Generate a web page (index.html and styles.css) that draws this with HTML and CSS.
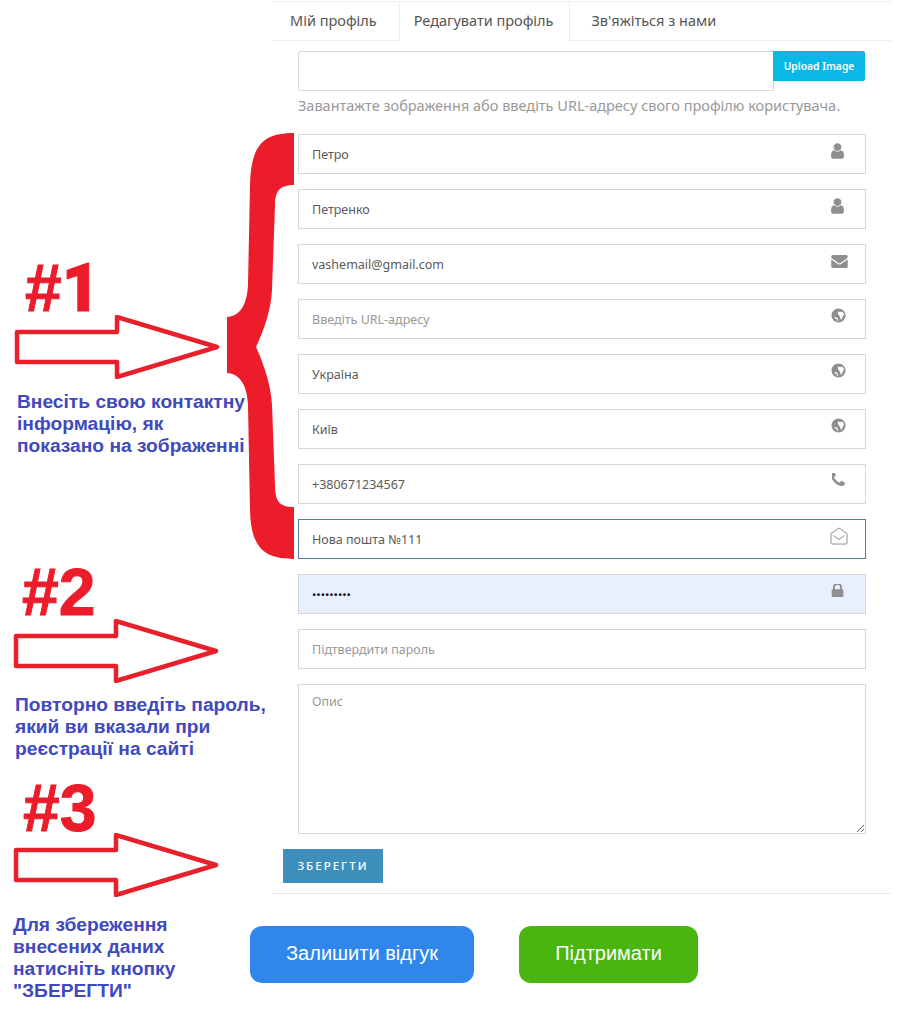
FILE: index.html
```html
<!DOCTYPE html>
<html lang="uk">
<head>
<meta charset="utf-8">
<title>Редагувати профіль</title>
<link rel="stylesheet" href="styles.css">
</head>
<body>
<svg width="0" height="0" class="defs">
  <symbol id="i-user" viewBox="256 128 1280 1536"><path d="M1536 1399q0 109-62.5 187t-150.5 78h-854q-88 0-150.5-78t-62.5-187q0-85 8.5-160.5t31.5-152 58.5-131 94-89 134.5-34.5q131 128 313 128t313-128q76 0 134.5 34.5t94 89 58.5 131 31.5 152 8.5 160.5zm-256-887q0 159-112.5 271.5t-271.5 112.5-271.5-112.5-112.5-271.5 112.5-271.5 271.5-112.5 271.5 112.5 112.5 271.5z"/></symbol>
  <symbol id="i-mail" viewBox="0 256 1792 1408"><path d="M1792 710v794q0 66-47 113t-113 47h-1472q-66 0-113-47t-47-113v-794q44 49 101 87 362 246 497 345 57 42 92.5 65.5t94.5 48 110 24.5h2q51 0 110-24.5t94.5-48 92.5-65.5q170-123 498-345 57-39 100-87zm0-294q0 79-49 151t-122 123q-376 261-468 325-10 7-42.5 30.5t-54 38-52 32.5-57.5 27-50 9h-2q-23 0-50-9t-57.5-27-52-32.5-54-38-42.5-30.5q-91-64-262-182.5t-205-142.5q-62-42-117-115.5t-55-136.5q0-78 41.5-130t118.5-52h1472q65 0 112.5 47t47.5 113z"/></symbol>
  <symbol id="i-globe" viewBox="0 0 16 16"><path fill-rule="evenodd" d="M8 .5a7.500 7.500 0 1 1 0 15 7.500 7.500 0 0 1 0-15zM8 3.500 7.200 5.200 8 7.200 9.800 9.800 10.500 12.800 12 10.800 12.800 8.200 14 7.200 13 4.800 11.300 3.800 9.500 4.600zM3.500 9.500 4.800 11.500 6.500 12 6.300 13.500 7.300 13.800 7.500 11.500 5.500 9.800z"/></symbol>
  <symbol id="i-phone" viewBox="320 256 1280 1280"><path d="M1600 1240q0 27-10 70.5t-21 68.5q-21 50-122 106-94 51-186 51-27 0-53-3.5t-57.5-12.5-47-14.5-55.5-20.5-49-18q-98-35-175-83-127-79-264-216t-216-264q-48-77-83-175-3-9-18-49t-20.5-55.5-14.5-47-12.5-57.5-3.5-53q0-92 51-186 56-101 106-122 25-11 68.5-21t70.5-10q14 0 21 3 18 6 53 76 11 19 30 54t35 63.5 31 53.5q3 4 17.5 25t21.5 35.5 7 28.5q0 20-28.5 50t-62 55-62 53-28.5 46q0 9 5 22.5t8.5 20.5 14 24 11.5 19q76 137 174 235t235 174q2 1 19 11.5t24 14 20.5 8.5 22.5 5q18 0 46-28.5t53-62 55-62 50-28.5q14 0 28.5 7t35.5 21.5 25 17.5q25 15 53.5 31t63.5 35 54 30q70 35 76 53 3 7 3 21z"/></symbol>
  <symbol id="i-lock" viewBox="256 256 1280 1280"><path d="M640 768h512v-192q0-106-75-181t-181-75-181 75-75 181v192zm832 96v576q0 40-28 68t-68 28h-960q-40 0-68-28t-28-68v-576q0-40 28-68t68-28h32v-192q0-184 132-316t316-132 316 132 132 316v192h32q40 0 68 28t28 68z"/></symbol>
  <symbol id="i-open" viewBox="0 0 18 18"><path fill="none" stroke="currentColor" d="M1 6.500 9 1l8 5.500V16a1 1 0 0 1-1 1H2a1 1 0 0 1-1-1zM3.500 8.500 9 12.500l5.500-4"/></symbol>
  <symbol id="arrow" viewBox="0 0 206 64"><path fill="none" stroke="#e8202c" stroke-width="4.500" stroke-linejoin="round" d="M3 17H103V2L203 32 103 62V47H3z"/></symbol>
</svg>

<svg class="brace" width="70" height="430" viewBox="225 131 70 430" aria-hidden="true">
  <path fill="#ed1c2a" d="M294 133C264 133 251 144 250 185L248 285C247 305 240 316 227 317V373C240 374 247 385 248 405L250 510C251 548 264 559 294 559V507C280 507 275 502 275 485L272 405C271 385 264 365 256 347C264 330 271 310 272 290L275 205C275 191 280 185 294 185z"/>
</svg>

<div class="page">
  <aside class="notes">
    <section class="note note-one">
      <div class="mark">#<span class="mark-digit">1</span></div>
      <svg class="arrow"><use href="#arrow"/></svg>
      <p>Внесіть свою контактну<br>інформацію, як<br>показано на зображенні</p>
    </section>
    <section class="note note-two">
      <div class="mark">#2</div>
      <svg class="arrow"><use href="#arrow"/></svg>
      <p>Повторно введіть пароль,<br>який ви вказали при<br>реєстрації на сайті</p>
    </section>
    <section class="note note-three">
      <div class="mark">#3</div>
      <svg class="arrow"><use href="#arrow"/></svg>
      <p>Для збереження<br>внесених даних<br>натисніть кнопку<br>"ЗБЕРЕГТИ"</p>
    </section>
  </aside>

  <main class="main">
    <div class="panel">
      <nav class="tabs">
        <a class="tab">Мій профіль</a>
        <a class="tab tab-active">Редагувати профіль</a>
        <a class="tab tab-last">Зв'яжіться з нами</a>
      </nav>
      <form class="form">
        <div class="upload">
          <input class="upload-input" type="text">
          <button class="upload-btn" type="button">Upload Image</button>
        </div>
        <p class="help">Завантажте зображення або введіть URL-адресу свого профілю користувача.</p>
        <div class="fields">
          <div class="field"><input class="input" type="text" value="Петро"><svg class="icon icon-user"><use href="#i-user"/></svg></div>
          <div class="field"><input class="input" type="text" value="Петренко"><svg class="icon icon-user"><use href="#i-user"/></svg></div>
          <div class="field"><input class="input" type="text" value="vashemail@gmail.com"><svg class="icon icon-mail"><use href="#i-mail"/></svg></div>
          <div class="field"><input class="input" type="text" placeholder="Введіть URL-адресу"><svg class="icon icon-globe"><use href="#i-globe"/></svg></div>
          <div class="field"><input class="input" type="text" value="Україна"><svg class="icon icon-globe"><use href="#i-globe"/></svg></div>
          <div class="field"><input class="input" type="text" value="Київ"><svg class="icon icon-globe"><use href="#i-globe"/></svg></div>
          <div class="field"><input class="input" type="text" value="+380671234567"><svg class="icon icon-phone"><use href="#i-phone"/></svg></div>
          <div class="field"><input class="input input-focus" type="text" value="Нова пошта №111"><svg class="icon icon-open"><use href="#i-open"/></svg></div>
          <div class="field"><input class="input input-filled" type="password" value="123456789"><svg class="icon icon-lock"><use href="#i-lock"/></svg></div>
          <div class="field"><input class="input" type="text" placeholder="Підтвердити пароль"></div>
          <textarea class="input textarea" placeholder="Опис"></textarea>
        </div>
        <button class="save" type="button">ЗБЕРЕГТИ</button>
      </form>
    </div>
    <div class="actions">
      <a class="action action-blue">Залишити відгук</a>
      <a class="action action-green">Підтримати</a>
    </div>
  </main>
</div>
</body>
</html>
```
FILE: styles.css
```css
* { box-sizing: border-box; }
html, body { margin: 0; padding: 0; }
body {
  position: relative;
  height: 1024px;
  overflow: hidden;
  background: #fff;
  font-family: "Noto Sans", sans-serif;
  color: #555;
}
.defs { position: absolute; }
.brace { position: absolute; left: 225px; top: 131px; z-index: 2; }
.page { display: flex; align-items: flex-start; }

/* Annotations */
.notes { flex: 0 0 250px; width: 250px; white-space: nowrap; position: relative; z-index: 3; }
.note p {
  margin: 0;
  font: bold 19.2px/22px "Liberation Sans", Arial, sans-serif;
  color: #4049bd;
}
.mark {
  font: bold 66px/50px "Liberation Sans", Arial, sans-serif;
  color: #ed1c2a;
  -webkit-text-stroke: 1px #ed1c2a;
}
.mark-digit { font-family: Roboto, sans-serif; font-weight: 900; }
.arrow { display: block; width: 206px; height: 64px; }
.note-one { padding: 263px 0 0 0; }
.note-one .mark { margin-left: 25px; }
.note-one .arrow { margin: 1px 0 12px 14px; }
.note-one p { margin-left: 17px; }
.note-two { padding-top: 110px; }
.note-two .mark { margin-left: 22px; }
.note-two .arrow { margin: 2px 0 11px 13px; }
.note-two p { margin-left: 15px; }
.note-three { padding-top: 23px; }
.note-three .mark { margin-left: 23px; }
.note-three .arrow { margin: 0 0 17px 13px; }
.note-three p { margin-left: 13px; }

/* Panel */
.main { flex: 1; min-width: 0; padding-top: 1px; }
.panel { width: 619px; margin-left: 22px; border-bottom: 1px solid #e8e8e8; padding-bottom: 10px; }
.tabs {
  display: flex;
  height: 40px;
  border-top: 1px solid #eee;
  border-bottom: 1px solid #eee;
}
.tab {
  display: flex;
  align-items: center;
  padding: 0 18px 2px;
  font-size: 14.5px;
  color: #555;
}
.tab-active {
  height: 40px;
  margin-left: 4px;
  padding: 0 16px 4px 14px;
  border-left: 1px solid #eee;
  border-right: 1px solid #eee;
  background: #fff;
}
.tab-last { padding-left: 21px; }
.form { padding: 10px 25px 0 26px; }
.upload { display: flex; align-items: flex-start; }
.upload-input {
  width: 476px;
  height: 40px;
  border: 1px solid #d8d8d8;
  border-radius: 2px 0 0 2px;
  outline: 0;
}
.upload-btn {
  width: 92px;
  height: 30px;
  margin-left: -1px;
  padding: 0;
  border: 0;
  border-radius: 0 2px 2px 0;
  background: #0ab8e8;
  color: #fff;
  font: 600 10.300px "Noto Sans", sans-serif;
}
.help {
  margin: 4px 0 19px;
  font-size: 14.5px;
  line-height: 20px;
  color: #999;
  white-space: nowrap;
}
.fields { display: flex; flex-direction: column; gap: 15px; }
.field { position: relative; height: 40px; }
.input {
  display: block;
  width: 568px;
  height: 40px;
  padding: 0 13px;
  border: 1px solid #d6d6d6;
  border-radius: 0;
  outline: 0;
  background: #fff;
  color: #5a5a5a;
  font: 12.5px "Noto Sans", sans-serif;
}
.input::placeholder { color: #999; opacity: 1; }
.input-focus { border-color: #4f8296; }
.input-filled { background: #e8f0fe; color: #000; font-size: 11.5px; }
.textarea { height: 150px; padding: 8px 13px; resize: vertical; }
.icon { position: absolute; fill: #8f8f8f; color: #8f8f8f; }
.icon-user { left: 533px; top: 9px; width: 13px; height: 16px; }
.icon-mail { left: 533px; top: 11px; width: 17px; height: 13px; }
.icon-globe { left: 533px; top: 9px; width: 15px; height: 15px; }
.icon-phone { left: 534px; top: 9px; width: 13px; height: 13px; }
.icon-open { left: 532px; top: 8px; width: 18px; height: 18px; }
.icon-lock { left: 533px; top: 10px; width: 13px; height: 13px; }
.save {
  display: block;
  width: 100px;
  height: 34px;
  margin: 15px 0 0 -15px;
  padding: 0 0 2px;
  border: 0;
  background: #3f8fbd;
  color: #fff;
  font: 500 11.500px "Noto Sans", sans-serif;
  letter-spacing: 2px;
}

/* Bottom actions */
.actions { display: flex; gap: 45px; margin-top: 32px; }
.action {
  display: flex;
  align-items: center;
  justify-content: center;
  height: 57px;
  padding-bottom: 3px;
  border-radius: 12px;
  color: #fff;
  font: 20px "Liberation Sans", Arial, sans-serif;
}
.action-blue { width: 224px; background: #2f86eb; }
.action-green { width: 179px; background: #4bb50f; }
```
